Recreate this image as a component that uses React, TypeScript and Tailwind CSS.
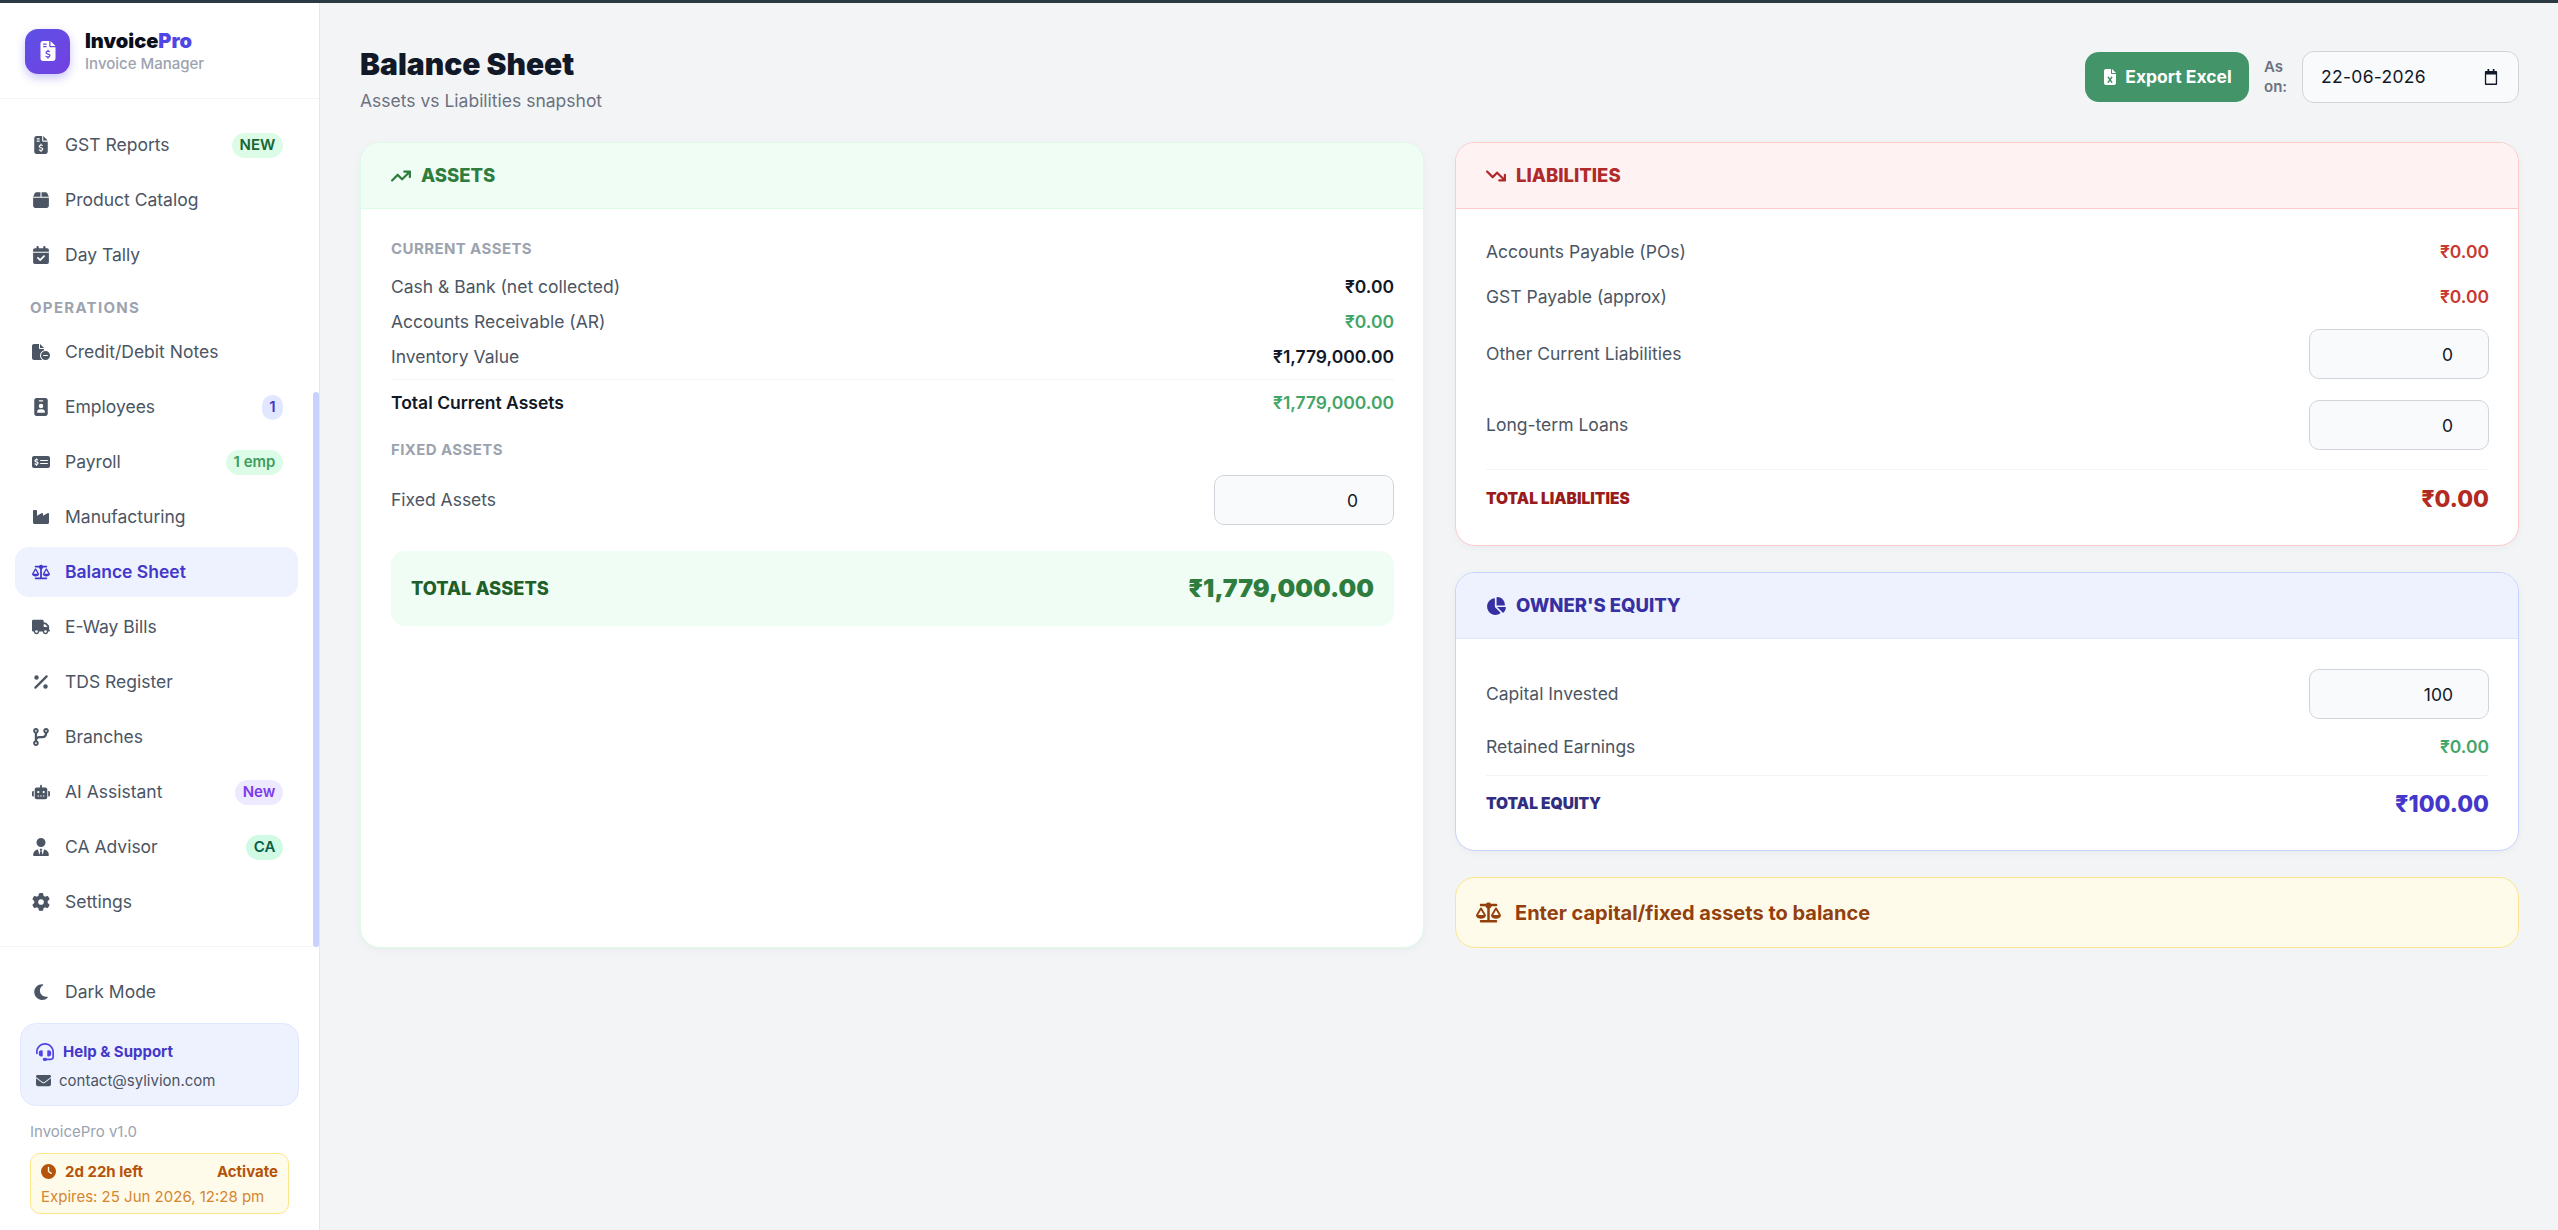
import type { ReactNode } from 'react';
import {
  FaFileInvoiceDollar, FaBox, FaCalendarCheck, FaFileCircleMinus, FaIdBadge, FaMoneyCheckDollar,
  FaIndustry, FaScaleBalanced, FaTruck, FaPercent, FaCodeBranch, FaRobot, FaUserTie, FaGear, FaMoon,
  FaEnvelope, FaClock, FaArrowTrendUp, FaArrowTrendDown, FaChartPie, FaFileExcel, FaHeadset,
} from 'react-icons/fa6';

function NavItem({ icon, label, badge, active }: { icon: ReactNode; label: string; badge?: ReactNode; active?: boolean }) {
  return (
    <div className={`flex h-[50px] shrink-0 items-center rounded-[14px] px-[15px] text-[17.5px] ${active ? 'bg-[#eef2ff] font-semibold text-[#4338ca]' : 'text-[#4b5563]'}`}>
      <span className="flex w-[22px] shrink-0 items-center justify-center [&>svg]:h-[18px] [&>svg]:w-auto [&>svg]:max-w-none">{icon}</span>
      <span className="ml-[13px] flex-1">{label}</span>
      {badge}
    </div>
  );
}

function Badge({ children, className }: { children: ReactNode; className: string }) {
  return <span className={`flex h-[25px] items-center justify-center rounded-full text-[15px] font-semibold ${className}`}>{children}</span>;
}

function Row({ label, value, color = 'text-[#111827]', className = 'h-[35px]' }: { label: string; value: string; color?: string; className?: string }) {
  return (
    <div className={`flex items-center justify-between text-[17.5px] ${className}`}>
      <span className="text-[#4b5563]">{label}</span>
      <span className={`font-semibold ${color}`}>{value}</span>
    </div>
  );
}

function NumberRow({ label, value, className = '' }: { label: string; value: string; className?: string }) {
  return (
    <div className={`flex items-center justify-between text-[17.5px] ${className}`}>
      <span className="text-[#4b5563]">{label}</span>
      <input
        type="number"
        defaultValue={value}
        className="h-[50px] w-[180px] rounded-[10px] border border-[#d1d5db] bg-[#f9fafb] pl-4 pr-[20px] text-right text-[17.5px] text-[#111827] outline-none"
      />
    </div>
  );
}

function CardHeader({ icon, title, className }: { icon: ReactNode; title: string; className: string }) {
  return (
    <div className={`flex h-[66px] items-center gap-[10px] border-b px-[30px] text-[18.5px] font-extrabold ${className}`}>
      <span className="flex w-[20px] justify-center text-[20px]">{icon}</span>
      <span>{title}</span>
    </div>
  );
}

export default function App() {
  return (
    <div className="flex h-screen flex-col overflow-hidden bg-[#f3f4f6] font-['Inter',sans-serif]">
      <div className="h-[3px] shrink-0 bg-[#2b3a42]" />
      <div className="flex min-h-0 flex-1">
        {/* sidebar */}
        <aside className="relative flex w-[320px] shrink-0 flex-col border-r border-[#e5e7eb] bg-white">
          <div className="flex h-[96px] shrink-0 items-center gap-[15px] border-b border-[#f3f4f6] pt-[1px] pl-[25px]">
            <div className="flex h-[45px] w-[45px] items-center justify-center rounded-[13px] bg-gradient-to-br from-[#5b50e6] to-[#7340e0] text-[20px] text-white shadow-[0_4px_10px_rgba(79,70,229,0.3)]">
              <FaFileInvoiceDollar />
            </div>
            <div>
              <div className="text-[20px] leading-[25px] font-black text-[#0b0f1a]">Invoice<span className="text-[#4f46e5]">Pro</span></div>
              <div className="text-[15px] leading-[20px] font-medium text-[#9ca3af]">Invoice Manager</div>
            </div>
          </div>

          <nav className="flex h-[848px] shrink-0 flex-col gap-[5px] overflow-hidden border-b border-[#f3f4f6] pt-[21px] pr-[21px] pl-[15px]">
            <NavItem icon={<FaFileInvoiceDollar />} label="GST Reports" badge={<Badge className="w-[51px] bg-[#dcfce7] text-[#166534]">NEW</Badge>} />
            <NavItem icon={<FaBox />} label="Product Catalog" />
            <NavItem icon={<FaCalendarCheck />} label="Day Tally" />
            <div className="mt-[9px] flex h-[28px] shrink-0 items-center px-[15px] text-[15px] font-bold tracking-[1.3px] text-[#9ca3af]">OPERATIONS</div>
            <NavItem icon={<FaFileCircleMinus />} label="Credit/Debit Notes" />
            <NavItem icon={<FaIdBadge />} label="Employees" badge={<Badge className="w-[21px] bg-[#e0e7ff] text-[#4338ca]">1</Badge>} />
            <NavItem icon={<FaMoneyCheckDollar />} label="Payroll" badge={<Badge className="w-[57px] bg-[#dcfce7] text-[#3f9c5f]">1 emp</Badge>} />
            <NavItem icon={<FaIndustry />} label="Manufacturing" />
            <NavItem icon={<FaScaleBalanced />} label="Balance Sheet" active />
            <NavItem icon={<FaTruck />} label="E-Way Bills" />
            <NavItem icon={<FaPercent />} label="TDS Register" />
            <NavItem icon={<FaCodeBranch />} label="Branches" />
            <NavItem icon={<FaRobot />} label="AI Assistant" badge={<Badge className="w-[48px] bg-[#ede9fe] text-[#7c3aed]">New</Badge>} />
            <NavItem icon={<FaUserTie />} label="CA Advisor" badge={<Badge className="w-[37px] bg-[#d1fae5] text-[#065f46]">CA</Badge>} />
            <NavItem icon={<FaGear />} label="Settings" />
          </nav>
          {/* scrollbar thumb */}
          <div className="absolute top-[389px] right-0 h-[555px] w-[6px] rounded-full bg-[#c7d2fe]" />

          <div className="flex-1 px-[15px] pt-[20px]">
            <div className="flex h-[50px] items-center px-[15px] text-[17.5px] text-[#4b5563]">
              <span className="flex w-[22px] justify-center text-[18px]"><FaMoon /></span>
              <span className="ml-[13px]">Dark Mode</span>
            </div>
            <div className="mx-[5px] mt-[6px] h-[83px] rounded-[16px] border border-[#e0e7ff] bg-[#eef2ff] px-[15px] pt-[17px]">
              <div className="flex items-center gap-[9px] text-[15px] font-bold text-[#4338ca]">
                <FaHeadset className="text-[18px] text-[#4f46e5]" /> Help &amp; Support
              </div>
              <div className="mt-[6px] flex items-center gap-[8px] text-[15px] text-[#4b5563]">
                <FaEnvelope className="text-[15px]" /> contact@sylivion.com
              </div>
            </div>
            <div className="mt-[15px] px-[15px] text-[15px] text-[#9ca3af]">InvoicePro v1.0</div>
            <div className="mx-[15px] mt-[9px] h-[61px] rounded-[10px] border border-[#fde68a] bg-[#fffbeb] px-[10px] pt-[7px]">
              <div className="flex items-center justify-between text-[15px] font-bold text-[#b45309]">
                <span className="flex items-center gap-[9px]"><FaClock className="text-[15px]" /> 2d 22h left</span>
                <span>Activate</span>
              </div>
              <div className="mt-[3px] text-[15px] text-[#d4862f]">Expires: 25 Jun 2026, 12:28 pm</div>
            </div>
          </div>
        </aside>

        {/* main */}
        <main className="min-w-0 flex-1 pr-[39px] pl-[40px]">
          <div className="flex h-[139px] items-start justify-between pt-[46px]">
            <div>
              <h1 className="text-[30px] leading-[30px] font-black text-[#111827]">Balance Sheet</h1>
              <p className="mt-[9px] text-[17.5px] text-[#6b7280]">Assets vs Liabilities snapshot</p>
            </div>
            <div className="mt-[2px] flex items-center">
              <button className="flex h-[50px] w-[164px] items-center justify-center gap-[7px] rounded-[14px] bg-[#439468] text-[17.5px] font-bold text-white">
                <FaFileExcel className="text-[16px]" /> Export Excel
              </button>
              <span className="ml-[15px] w-[24px] text-[15px] leading-[20px] font-semibold text-[#6b7280]">As on:</span>
              <div className="ml-[14px] flex h-[52px] w-[217px] items-center justify-between rounded-[12px] border border-[#d1d5db] bg-[#f9fafb] pr-[20px] pl-[18px] text-[17.5px] tracking-[0.3px] text-[#111827]">
                <span>22-06-2026</span>
                <svg viewBox="0 0 16 16" className="h-[16px] w-[14px]" fill="currentColor" preserveAspectRatio="none"><path d="M4 0h2v2h4V0h2v2h2a1 1 0 0 1 1 1v12a1 1 0 0 1-1 1H2a1 1 0 0 1-1-1V3a1 1 0 0 1 1-1h2V0zM2.5 5.5v9h11v-9h-11z" /></svg>
              </div>
            </div>
          </div>

          <div className="grid h-[806px] grid-cols-2 gap-x-[31px]">
            {/* assets */}
            <section className="overflow-hidden rounded-[20px] border border-[#dcfce7] bg-white shadow-[0_2px_8px_rgba(0,0,0,0.04)]">
              <CardHeader icon={<FaArrowTrendUp />} title="ASSETS" className="border-[#dcfce7] bg-[#f0fdf4] text-[#2e7d3e]" />
              <div className="pt-[28px] pr-[29px] pl-[30px]">
                <div className="flex h-[24px] items-center text-[15px] font-bold tracking-[0.4px] text-[#9ca3af]">CURRENT ASSETS</div>
                <div className="mt-[9px]">
                  <Row label="Cash &amp; Bank (net collected)" value="₹0.00" />
                  <Row label="Accounts Receivable (AR)" value="₹0.00" color="text-[#43a567]" />
                  <Row label="Inventory Value" value="₹1,779,000.00" />
                </div>
                <div className="mt-[4px] border-t border-[#f3f4f6]" />
                <div className="flex h-[46px] items-center justify-between text-[17.5px] font-semibold">
                  <span className="text-[#111827]">Total Current Assets</span>
                  <span className="text-[#43a567]">₹1,779,000.00</span>
                </div>
                <div className="mt-[12px] flex h-[24px] items-center text-[15px] font-bold tracking-[0.4px] text-[#9ca3af]">FIXED ASSETS</div>
                <NumberRow label="Fixed Assets" value="0" className="mt-[13px]" />
                <div className="mt-[26px] flex h-[75px] items-center justify-between rounded-[14px] bg-[#f0fdf4] px-[20px] text-[#2e7d3e]">
                  <span className="text-[18.3px] font-extrabold text-[#1f5f2a]">TOTAL ASSETS</span>
                  <span className="text-[25px] font-black">₹1,779,000.00</span>
                </div>
              </div>
            </section>

            <div className="flex flex-col gap-[26px]">
              {/* liabilities */}
              <section className="h-[404px] overflow-hidden rounded-[20px] border border-[#fecaca] bg-white shadow-[0_2px_8px_rgba(0,0,0,0.04)]">
                <CardHeader icon={<FaArrowTrendDown />} title="LIABILITIES" className="border-[#fecaca] bg-[#fef2f2] text-[#b02a2a]" />
                <div className="pt-[21px] pr-[29px] pl-[30px]">
                  <Row label="Accounts Payable (POs)" value="₹0.00" color="text-[#c9392f]" className="h-[45px]" />
                  <Row label="GST Payable (approx)" value="₹0.00" color="text-[#c9392f]" className="h-[45px]" />
                  <NumberRow label="Other Current Liabilities" value="0" className="mt-[9px]" />
                  <NumberRow label="Long-term Loans" value="0" className="mt-[21px]" />
                  <div className="mt-[19px] border-t border-[#f3f4f6]" />
                  <div className="flex h-[58px] items-center justify-between">
                    <span className="text-[15.5px] font-black text-[#991b1b]">TOTAL LIABILITIES</span>
                    <span className="text-[23px] font-extrabold text-[#b32a22]">₹0.00</span>
                  </div>
                </div>
              </section>

              {/* equity */}
              <section className="h-[279px] overflow-hidden rounded-[20px] border border-[#c7d2fe] bg-white shadow-[0_2px_8px_rgba(0,0,0,0.04)]">
                <CardHeader icon={<FaChartPie />} title="OWNER'S EQUITY" className="border-[#e0e7ff] bg-[#eef2ff] text-[#3730a3]" />
                <div className="pt-[30px] pr-[29px] pl-[30px]">
                  <NumberRow label="Capital Invested" value="100" />
                  <Row label="Retained Earnings" value="₹0.00" color="text-[#43a567]" className="mt-[11px] h-[35px]" />
                  <div className="mt-[10px] border-t border-[#f3f4f6]" />
                  <div className="flex h-[56px] items-center justify-between">
                    <span className="text-[15.5px] font-black text-[#312e81]">TOTAL EQUITY</span>
                    <span className="text-[23px] font-extrabold text-[#4338ca]">₹100.00</span>
                  </div>
                </div>
              </section>

              {/* balance hint */}
              <div className="flex h-[71px] items-center gap-[14px] rounded-[20px] border border-[#fde68a] bg-[#fffbeb] px-[20px] text-[20px] font-bold text-[#92400e]">
                <FaScaleBalanced className="text-[25px]" /> Enter capital/fixed assets to balance
              </div>
            </div>
          </div>
        </main>
      </div>
    </div>
  );
}
